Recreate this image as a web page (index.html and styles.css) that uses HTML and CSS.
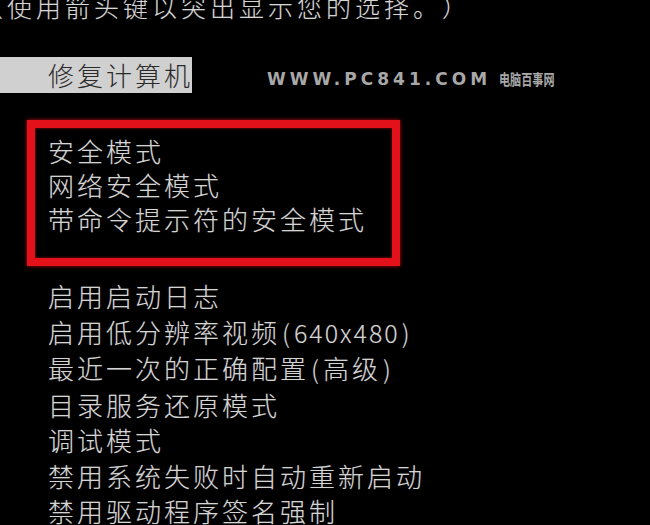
FILE: index.html
```html
<!DOCTYPE html>
<html lang="zh-CN">
<head>
<meta charset="utf-8">
<title>高级启动选项</title>
<link rel="stylesheet" href="styles.css">
</head>
<body>
<div class="screen">
  <div class="hint">（使用箭头键以突出显示您的选择。）</div>
  <div class="row">
    <div class="selected">修复计算机</div>
    <div class="watermark">WWW.PC841.COM <span class="cn">电脑百事网</span></div>
  </div>
  <div class="box">
    <div class="item box-item">安全模式</div>
    <div class="item box-item">网络安全模式</div>
    <div class="item box-item">带命令提示符的安全模式</div>
  </div>
  <div class="list">
    <div class="item">启用启动日志</div>
    <div class="item">启用低分辨率视频<span class="lat"><span class="par">(</span>640x480<span class="par">)</span></span></div>
    <div class="item">最近一次的正确配置<span class="lat par">(</span>高级<span class="lat par">)</span></div>
    <div class="item">目录服务还原模式</div>
    <div class="item">调试模式</div>
    <div class="item">禁用系统失败时自动重新启动</div>
    <div class="item">禁用驱动程序签名强制</div>
  </div>
</div>
</body>
</html>
```

FILE: styles.css
```css
html, body {
  margin: 0;
  padding: 0;
  background: #000;
}

.screen {
  width: 650px;
  height: 525px;
  overflow: hidden;
  background: #000;
  color: #d4d4d4;
  font-family: "Noto Sans CJK SC", "Noto Sans", sans-serif;
  font-weight: 300;
  text-spacing-trim: space-all;
  text-shadow: 0 0 1px rgba(255, 255, 255, 0.25);
}

.hint {
  margin-top: -9px;
  margin-left: -22px;
  font-size: 25px;
  line-height: 30px;
  letter-spacing: 4px;
  white-space: nowrap;
}

.row {
  display: flex;
  align-items: center;
  margin-top: 36px;
  height: 36px;
}

.selected {
  box-sizing: border-box;
  width: 192px;
  height: 36px;
  padding-left: 48px;
  background: #d0d0d0;
  color: #2a2a2a;
  font-size: 26px;
  line-height: 36px;
  letter-spacing: 3px;
  white-space: nowrap;
  overflow: hidden;
  text-shadow: none;
}

.watermark {
  margin-left: 75px;
  margin-top: 6px;
  font-family: "DejaVu Sans", sans-serif;
  font-weight: bold;
  font-size: 17px;
  letter-spacing: 4px;
  color: #a8a8a8;
  white-space: nowrap;
  text-shadow: none;
}

.watermark .cn {
  display: inline-block;
  font-family: "Noto Sans CJK SC", sans-serif;
  font-weight: bold;
  font-size: 15px;
  letter-spacing: 0;
  margin-left: -2px;
  transform: scaleX(0.74);
  transform-origin: left center;
}

.box {
  margin-top: 27px;
  margin-left: 27px;
  width: 373px;
  box-sizing: border-box;
  border: 8px solid #e3121a;
  padding: 6px 0 22px 13px;
  box-shadow: 0 0 4px rgba(255, 20, 20, 0.7), inset 0 0 3px rgba(255, 20, 20, 0.6);
}

.item {
  font-size: 26px;
  line-height: 35.5px;
  letter-spacing: 3px;
  white-space: nowrap;
}

.item .lat {
  font-size: 25px;
  letter-spacing: 2px;
}

.item .par {
  padding: 0 2px;
}

.box-item {
  line-height: 34px;
}

.list {
  margin-top: 12px;
  padding-left: 48px;
}
```
